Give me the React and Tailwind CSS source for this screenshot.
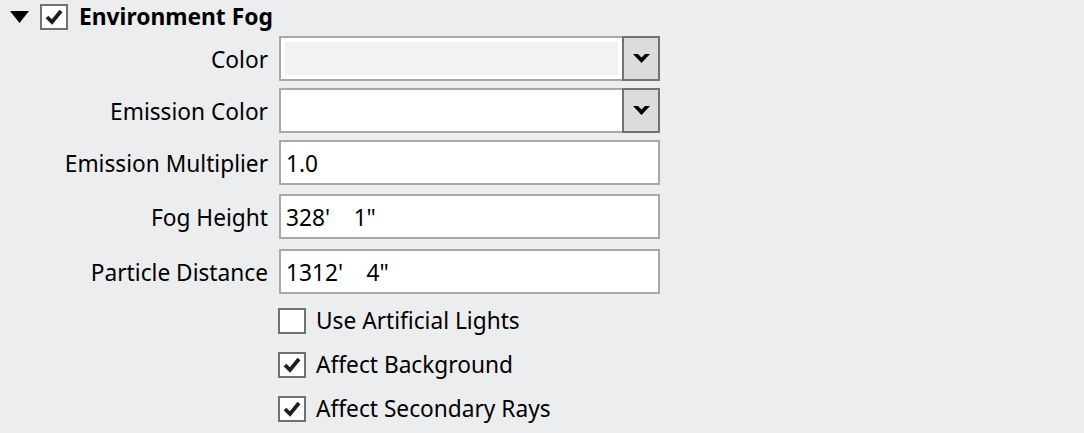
import React from 'react';

const font = { fontFamily: '"Noto Sans", "Open Sans", sans-serif' };

const Check = ({ checked }) => (
  <div className="w-[28px] h-[26px] border-2 border-[#707070] bg-white flex items-center justify-center shrink-0">
    {checked && (
      <svg width="24" height="22" viewBox="0 0 24 22">
        <path d="M5 11 L10 16 L19 5" fill="none" stroke="#1e1e1e" strokeWidth="3.8" />
      </svg>
    )}
  </div>
);

const Chevron = () => (
  <svg width="17" height="9" viewBox="0 0 17 9">
    <path d="M0 0 H5 L8.5 3.6 L12 0 H17 L8.5 9 Z" fill="#000" />
  </svg>
);

const ColorField = ({ inner }) => (
  <div className="w-[381px] h-[45px] flex border-2 border-[#a8a8ab] bg-white">
    <div className="flex-1 p-[4px]">
      <div className={`w-full h-full ${inner}`} />
    </div>
    <div className="w-[38px] -my-[2px] -mr-[2px] border-2 border-[#727272] bg-[#dcdcdc] flex items-center justify-center">
      <Chevron />
    </div>
  </div>
);

const TextField = ({ value }) => (
  <div className="w-[381px] h-[45px] border-2 border-[#a8a8ab] bg-white flex items-center pl-[5px] pt-[3px] text-[22.7px] text-black whitespace-pre">
    {value}
  </div>
);

const Row = ({ label, className = '', children }) => (
  <div className={`flex items-center ${className}`}>
    <div className="w-[268px] text-right text-[22.7px] text-black whitespace-nowrap pt-[3px]">{label}</div>
    <div className="ml-[11px]">{children}</div>
  </div>
);

const CheckRow = ({ checked, label }) => (
  <div className="flex items-center ml-[278px] h-[26px]">
    <Check checked={checked} />
    <span className="ml-[10px] text-[22.7px] text-black pt-[1px]">{label}</span>
  </div>
);

export default function App() {
  return (
    <div className="w-[1084px] h-[433px] bg-[#ecedef] overflow-hidden" style={font}>
      <div className="flex items-center h-[26px] mt-[4px]">
        <svg className="ml-[10px]" width="19" height="12" viewBox="0 0 19 12">
          <path d="M0 0 H19 L9.5 12 Z" fill="#000" />
        </svg>
        <div className="ml-[11px]">
          <Check checked />
        </div>
        <span className="ml-[11px] mt-[1px] text-[22.8px] font-bold text-black">Environment Fog</span>
      </div>
      <div className="flex flex-col mt-[6px]">
        <Row label="Color">
          <ColorField inner="bg-[#f2f2f2]" />
        </Row>
        <Row label="Emission Color" className="mt-[7px]">
          <ColorField inner="bg-white" />
        </Row>
        <Row label="Emission Multiplier" className="mt-[7px]">
          <TextField value="1.0" />
        </Row>
        <Row label="Fog Height" className="mt-[9px]">
          <TextField value={`328'    1"`} />
        </Row>
        <Row label="Particle Distance" className="mt-[10px]">
          <TextField value={`1312'    4"`} />
        </Row>
      </div>
      <div className="flex flex-col gap-[18px] mt-[14px]">
        <CheckRow label="Use Artificial Lights" />
        <CheckRow checked label="Affect Background" />
        <CheckRow checked label="Affect Secondary Rays" />
      </div>
    </div>
  );
}
